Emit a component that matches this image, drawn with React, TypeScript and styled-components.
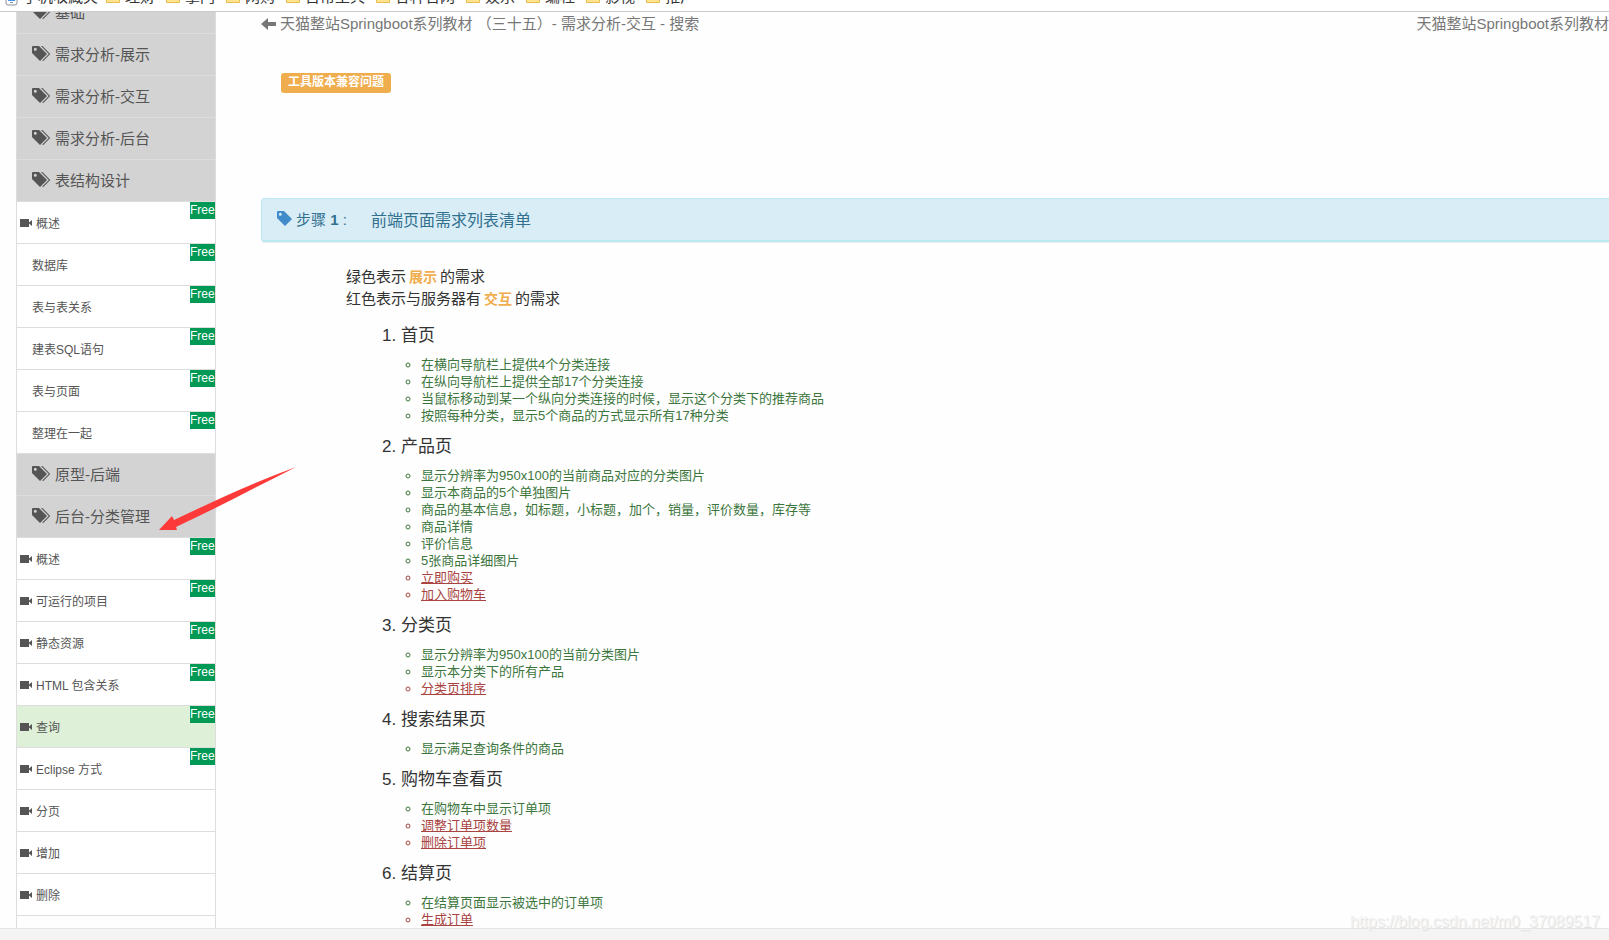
import React from "react";
import styled, { createGlobalStyle } from "styled-components";

const GlobalStyle = createGlobalStyle`
  * { box-sizing: border-box; }
  body {
    margin: 0;
    background: #fefefe;
    color: #333;
    font-family: "Liberation Sans", "Noto Sans CJK SC", sans-serif;
    font-size: 15px;
  }
  a { color: inherit; text-decoration: none; }
  svg { display: block; flex: none; }
`;

const Page = styled.div`
  display: flex;
  flex-direction: column;
  height: 100vh;
  position: relative;
  overflow: hidden;
`;

const BookmarkBar = styled.nav`
  flex: none;
  display: flex;
  align-items: flex-end;
  gap: 11px;
  height: 12px;
  padding-left: 5px;
  border-bottom: 1px solid #ccc;
  background: #fff;
  overflow: hidden;
`;

const Bookmark = styled.a<{ $width?: number }>`
  display: flex;
  flex: none;
  align-items: center;
  gap: 5px;
  width: ${(p) => (p.$width ? `${p.$width}px` : "auto")};
  height: 22px;
  padding-bottom: 6px;
  color: #333;
  line-height: 16px;
  white-space: nowrap;
`;

const Viewport = styled.div`
  flex: 1;
  min-height: 0;
  display: flex;
  align-items: flex-start;
  padding-left: 16px;
  overflow: hidden;
`;

const Sidebar = styled.nav`
  flex: none;
  width: 200px;
  margin-top: -20px;
  border: 1px solid #ddd;
  border-width: 0 1px;
  color: #555;
`;

const Row = styled.div`
  position: relative;
  height: 42px;
  border-bottom: 1px solid #ddd;
`;

const ChapterLink = styled.a`
  display: flex;
  align-items: center;
  gap: 5px;
  height: 100%;
  padding: 0 0 2px 15px;
  background: #d3d3d3;
`;

const LessonLink = styled.a<{ $active?: boolean; $video?: boolean }>`
  display: flex;
  align-items: center;
  gap: 4px;
  height: 100%;
  padding-left: ${(p) => (p.$video ? 3 : 15)}px;
  background: ${(p) => (p.$active ? "#dff0d8" : "#fff")};
  font-size: 12px;
`;

const FreeBadge = styled.span`
  position: absolute;
  top: 0;
  right: 0;
  width: 25px;
  height: 17px;
  background: #009955;
  color: #fff;
  font-size: 12px;
  line-height: 16px;
`;

const Pointer = styled.svg`
  position: absolute;
  left: 142px;
  top: -29px;
  z-index: 2;
  pointer-events: none;
`;

const Main = styled.main`
  flex: 1;
  min-width: 0;
  margin-left: 45px;
`;

const Pager = styled.div`
  display: flex;
  justify-content: space-between;
  color: #777;
  line-height: 24px;
  white-space: nowrap;
`;

const PagerLink = styled.a`
  display: flex;
  align-items: center;
  gap: 4px;
`;

const NoticeLabel = styled.a`
  display: block;
  width: fit-content;
  margin: 37px 0 105px 20px;
  padding: 0 7px 2px;
  border-radius: 3px;
  background: #f0ad4e;
  color: #fff;
  font-size: 12px;
  font-weight: bold;
  line-height: 18px;
`;

const StepBar = styled.h2`
  display: flex;
  align-items: center;
  height: 44px;
  margin: 0;
  padding: 0 0 2px 15px;
  border: 1px solid #bce8f1;
  border-width: 1px 0 2px 1px;
  border-radius: 4px 0 0 4px;
  background: #d9edf7;
  box-shadow: 0 1px 1px #eee;
  color: #31708f;
  font-size: 16px;
  font-weight: normal;
`;

const StepNumber = styled.span`
  width: 75px;
  margin-left: 4px;
  font-size: 15px;
`;

const Article = styled.article`
  padding: 24px 0 0 85px;
`;

const Intro = styled.p`
  margin: 0 0 14px;
  line-height: 21px;
`;

const Mark = styled.strong`
  margin: 0 3px;
  color: #f0ad4e;
  font-size: 14px;
`;

const PageList = styled.ol`
  margin: 0;
  padding-left: 55px;
  font-size: 17px;
  line-height: 24px;
`;

const PageItem = styled.li`
  margin-bottom: 11px;
`;

const FeatureList = styled.ul`
  margin: 8px 0 0;
  padding-left: 20px;
  list-style: circle;
  font-size: 13px;
  line-height: 17px;
`;

const Feature = styled.li<{ $interactive?: boolean }>`
  color: ${(p) => (p.$interactive ? "#a94442" : "#3c763d")};
  a { text-decoration: underline; }
`;

const StatusBar = styled.footer`
  flex: none;
  height: 12px;
  border-top: 1px solid #e5e5e5;
  background: #f4f4f4;
`;

const Watermark = styled.span`
  position: absolute;
  right: 9px;
  bottom: 8px;
  color: #f4f4f4;
  font-size: 16px;
  line-height: 20px;
  text-shadow: 1px 1px 1px #ddd;
`;

const FolderIcon = () => (
  <svg width="14" height="14" viewBox="0 0 14 14">
    <path d="M.5 1.5h5l1 2h7v9H.5z" fill="#ffe48f" stroke="#e8bd4c" />
  </svg>
);

const PhoneIcon = () => (
  <svg width="13" height="18" viewBox="0 0 13 18">
    <rect x="1" y="1" width="11" height="16" rx="2" fill="#fff" stroke="#8b8f9a" strokeWidth="1" />
    <rect x="3" y="4" width="7" height="9" fill="#4595ec" />
    <rect x="5" y="14" width="3" height="1" fill="#8b8f9a" />
  </svg>
);

const TAG = "M0 1Q0 0 1 0H7L15 8L8 15L0 7ZM3.3 1.8A1.5 1.5 0 1 0 3.3 4.8A1.5 1.5 0 1 0 3.3 1.8Z";

const TagIcon = () => (
  <svg width="15" height="15" viewBox="0 0 15 15">
    <path d={TAG} fill="#428bca" fillRule="evenodd" />
  </svg>
);

const TagsIcon = () => (
  <svg width="18" height="15" viewBox="0 0 18 15">
    <path d={TAG} fill="#555" fillRule="evenodd" />
    <path d="M9 0H10.5L18.3 8L11 15.3L10.3 14.5L16.8 8Z" fill="#555" />
  </svg>
);

const VideoIcon = () => (
  <svg width="12" height="8" viewBox="0 0 12 8">
    <path d="M0 0H9V3.5L12 1V7L9 4.5V8H0Z" fill="#555" />
  </svg>
);

const BackIcon = () => (
  <svg width="15" height="12" viewBox="0 0 15 12">
    <path d="M0 6L7 0V4H15V8H7V12Z" fill="#777" />
  </svg>
);

const bookmarks = ["理财", "掌门", "网购", "日常工具", "各种官网", "娱乐", "编程", "影视", "推广"];

type Entry = {
  text: string;
  chapter?: boolean;
  video?: boolean;
  free?: boolean;
  active?: boolean;
  pointed?: boolean;
};

const entries: Entry[] = [
  { text: "基础", chapter: true },
  { text: "需求分析-展示", chapter: true },
  { text: "需求分析-交互", chapter: true },
  { text: "需求分析-后台", chapter: true },
  { text: "表结构设计", chapter: true },
  { text: "概述", video: true, free: true },
  { text: "数据库", free: true },
  { text: "表与表关系", free: true },
  { text: "建表SQL语句", free: true },
  { text: "表与页面", free: true },
  { text: "整理在一起", free: true },
  { text: "原型-后端", chapter: true },
  { text: "后台-分类管理", chapter: true, pointed: true },
  { text: "概述", video: true, free: true },
  { text: "可运行的项目", video: true, free: true },
  { text: "静态资源", video: true, free: true },
  { text: "HTML 包含关系", video: true, free: true },
  { text: "查询", video: true, free: true, active: true },
  { text: "Eclipse 方式", video: true, free: true },
  { text: "分页", video: true },
  { text: "增加", video: true },
  { text: "删除", video: true },
];

type Section = { title: string; shown: string[]; interactive?: string[] };

const sections: Section[] = [
  {
    title: "首页",
    shown: [
      "在横向导航栏上提供4个分类连接",
      "在纵向导航栏上提供全部17个分类连接",
      "当鼠标移动到某一个纵向分类连接的时候，显示这个分类下的推荐商品",
      "按照每种分类，显示5个商品的方式显示所有17种分类",
    ],
  },
  {
    title: "产品页",
    shown: [
      "显示分辨率为950x100的当前商品对应的分类图片",
      "显示本商品的5个单独图片",
      "商品的基本信息，如标题，小标题，加个，销量，评价数量，库存等",
      "商品详情",
      "评价信息",
      "5张商品详细图片",
    ],
    interactive: ["立即购买", "加入购物车"],
  },
  {
    title: "分类页",
    shown: ["显示分辨率为950x100的当前分类图片", "显示本分类下的所有产品"],
    interactive: ["分类页排序"],
  },
  { title: "搜索结果页", shown: ["显示满足查询条件的商品"] },
  {
    title: "购物车查看页",
    shown: ["在购物车中显示订单项"],
    interactive: ["调整订单项数量", "删除订单项"],
  },
  { title: "结算页", shown: ["在结算页面显示被选中的订单项"], interactive: ["生成订单"] },
];

const SidebarRow = ({ entry }: { entry: Entry }) => (
  <Row>
    {entry.chapter ? (
      <ChapterLink href="#">
        <TagsIcon />
        {entry.text}
      </ChapterLink>
    ) : (
      <LessonLink href="#" $active={entry.active} $video={entry.video}>
        {entry.video && <VideoIcon />}
        {entry.text}
      </LessonLink>
    )}
    {entry.free && <FreeBadge>Free</FreeBadge>}
    {entry.pointed && (
      <Pointer width="138" height="64" viewBox="0 0 138 64">
        <path d="M0 63L13 49L15 53C55 34 96 15 137 0C97 20 58 41 17 60L18 63Z" fill="#fd3a3a" />
      </Pointer>
    )}
  </Row>
);

export default function App() {
  return (
    <Page>
      <GlobalStyle />
      <BookmarkBar>
        <Bookmark href="#" $width={90}>
          <PhoneIcon />
          手机收藏夹
        </Bookmark>
        {bookmarks.map((name) => (
          <Bookmark href="#" key={name}>
            <FolderIcon />
            {name}
          </Bookmark>
        ))}
      </BookmarkBar>
      <Viewport>
        <Sidebar>
          {entries.map((entry, i) => (
            <SidebarRow entry={entry} key={i} />
          ))}
          <Row />
        </Sidebar>
        <Main>
          <Pager>
            <PagerLink href="#">
              <BackIcon />
              天猫整站Springboot系列教材 （三十五）- 需求分析-交互 - 搜索
            </PagerLink>
            <PagerLink href="#">天猫整站Springboot系列教材</PagerLink>
          </Pager>
          <NoticeLabel href="#">工具版本兼容问题</NoticeLabel>
          <StepBar>
            <TagIcon />
            <StepNumber>
              步骤 <b>1</b> :
            </StepNumber>
            前端页面需求列表清单
          </StepBar>
          <Article>
            <Intro>
              绿色表示<Mark>展示</Mark>的需求
              <br />
              红色表示与服务器有<Mark>交互</Mark>的需求
            </Intro>
            <PageList>
              {sections.map((section) => (
                <PageItem key={section.title}>
                  {section.title}
                  <FeatureList>
                    {section.shown.map((text) => (
                      <Feature key={text}>{text}</Feature>
                    ))}
                    {section.interactive?.map((text) => (
                      <Feature key={text} $interactive>
                        <a href="#">{text}</a>
                      </Feature>
                    ))}
                  </FeatureList>
                </PageItem>
              ))}
            </PageList>
          </Article>
        </Main>
      </Viewport>
      <StatusBar />
      <Watermark>https://blog.csdn.net/m0_37089517</Watermark>
    </Page>
  );
}
